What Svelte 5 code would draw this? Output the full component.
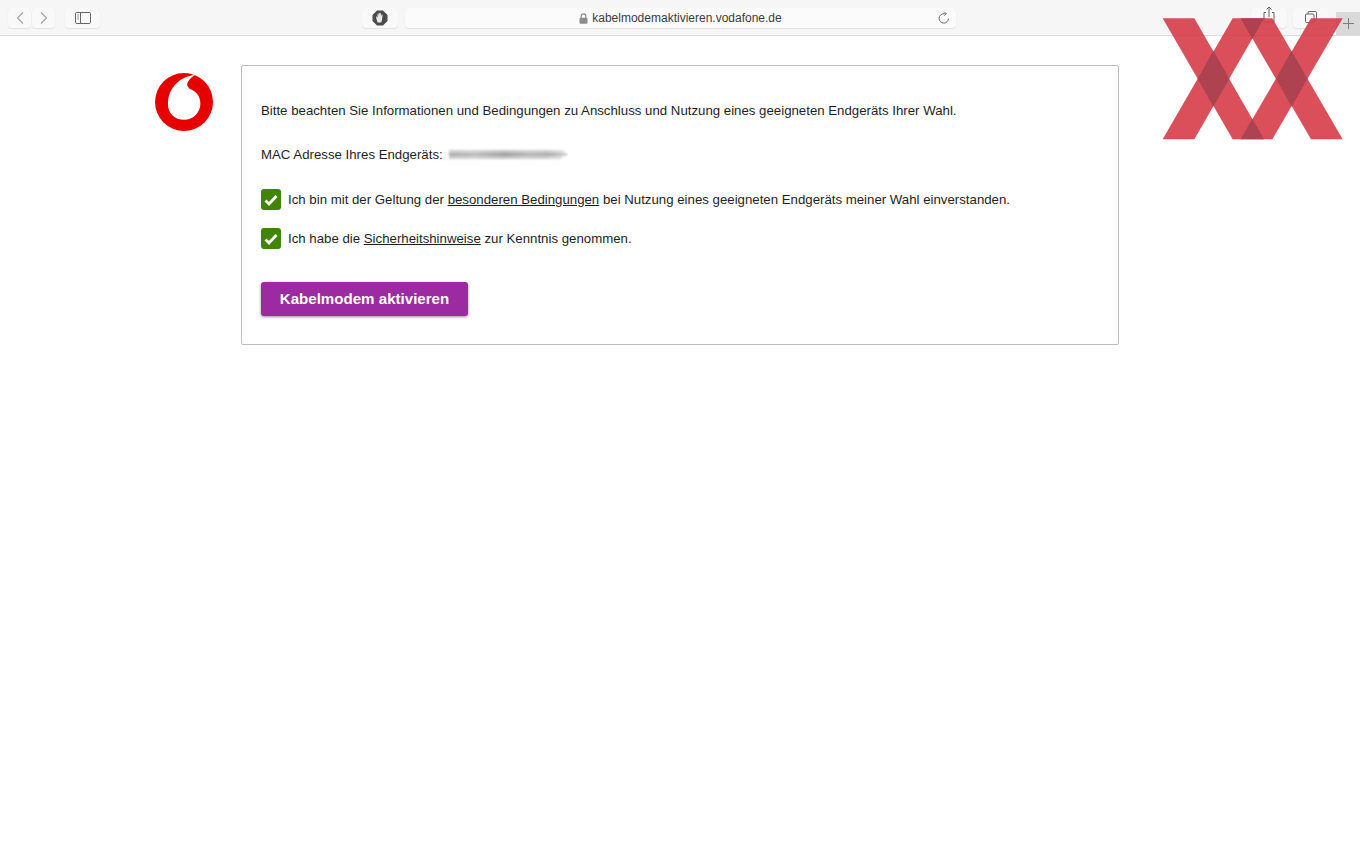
<script>
  const macStreaks = [
    { width: 98, opacity: 0.5 },
    { width: 100, opacity: 0.8 },
    { width: 96, opacity: 0.5 }
  ]
</script>

<div class="page">
  <header class="toolbar">
    <div class="nav-group">
      <button class="tool nav" aria-label="Zurück">
        <svg width="10" height="14" viewBox="0 0 10 14"><path d="M8 1.500 2.500 7 8 12.500" /></svg>
      </button>
      <button class="tool nav" aria-label="Vor">
        <svg width="10" height="14" viewBox="0 0 10 14"><path d="M2 1.500 7.500 7 2 12.500" /></svg>
      </button>
    </div>
    <button class="tool sidebar" aria-label="Seitenleiste">
      <svg width="16" height="12" viewBox="0 0 16 12">
        <rect x="0.500" y="0.500" width="15" height="11" rx="1.200" />
        <path d="M5.500 .5v11" />
        <path class="dots" d="M2 3h2M2 5h2M2 7h2" />
      </svg>
    </button>
    <button class="tool shield" aria-label="Blocker">
      <svg width="16" height="16" viewBox="0 0 16 16">
        <path class="octagon" d="M5 .5h6L15.500 5v6L11 15.500H5L.5 11V5z" />
        <path class="hand" d="M5.500 12.500 4.200 8V6.300l1.300 1V3.800l.8-.1.500 2.500V2.800l.9-.1.300 3V3l.9.200.100 3 .7-1.700.9.300-.6 5.200-.8 2.500z" />
      </svg>
    </button>
    <div class="address">
      <span class="host">
        <svg class="lock" width="9" height="11" viewBox="0 0 9 11">
          <path class="shackle" d="M2.200 5V3.200a2.300 2.300 0 0 1 4.600 0V5" />
          <rect x="0.500" y="4.800" width="8" height="6" rx="1" />
        </svg>
        kabelmodemaktivieren.vodafone.de
      </span>
      <svg class="reload" width="12" height="13" viewBox="0 0 12 13">
        <path d="M10.500 7.500A4.700 4.700 0 1 1 6 2.700h1.500" />
        <path d="M6.300.7 8.300 2.700 6.300 4.700" />
      </svg>
    </div>
    <div class="tool-spacer"></div>
    <button class="tool share" aria-label="Teilen">
      <svg width="14" height="18" viewBox="0 0 14 18">
        <path d="M4 6.500H2v9.500h10V6.500h-2" />
        <path d="M7 11V1M4.500 3.500 7 1l2.500 2.500" />
      </svg>
    </button>
    <button class="tool tabs" aria-label="Tabs">
      <svg width="12" height="12" viewBox="0 0 12 12">
        <rect x="3" y="0.500" width="8.500" height="8.500" rx="1" />
        <rect x="0.500" y="3" width="8.500" height="8.500" rx="1" class="front" />
      </svg>
    </button>
    <div class="new-tab">
      <svg width="11" height="11" viewBox="0 0 11 11"><path d="M5.500 0v11M0 5.500h11" /></svg>
    </div>
  </header>

  <main class="content">
    <svg class="logo" width="58" height="58" viewBox="47 40 170 170" role="img" aria-label="Vodafone">
      <circle cx="132" cy="125" r="85" fill="#e60000" />
      <path fill="#fff" d="M164 46C122 50 85 82 85 131C85 160 105 177 132 177C160 177 180 155 180 130C180 108 168 94 150 87C143 82 139 74 143 67C147 59 155 52 164 46Z" />
    </svg>

    <section class="card">
      <p class="intro">Bitte beachten Sie Informationen und Bedingungen zu Anschluss und Nutzung eines geeigneten Endgeräts Ihrer Wahl.</p>

      <p class="mac">
        MAC Adresse Ihres Endgeräts:
        <span class="mac-value" aria-hidden="true">
          {#each macStreaks as streak}
            <i style="width: {streak.width}%; opacity: {streak.opacity}"></i>
          {/each}
        </span>
      </p>

      <div class="check-row first">
        <span class="checkbox">
          <svg width="14" height="12" viewBox="0 0 14 12"><path d="M1.500 6.500 5 10l7.500-8" /></svg>
        </span>
        <span>Ich bin mit der Geltung der <a href="#bedingungen">besonderen Bedingungen</a> bei Nutzung eines geeigneten Endgeräts meiner Wahl einverstanden.</span>
      </div>

      <div class="check-row">
        <span class="checkbox">
          <svg width="14" height="12" viewBox="0 0 14 12"><path d="M1.500 6.500 5 10l7.500-8" /></svg>
        </span>
        <span>Ich habe die <a href="#sicherheit">Sicherheitshinweise</a> zur Kenntnis genommen.</span>
      </div>

      <button class="activate">Kabelmodem aktivieren</button>
    </section>
  </main>

  <svg class="watermark" width="210" height="150" viewBox="0 0 630 450" aria-hidden="true">
    <g class="bands">
      <polygon points="38,55 133,55 342,418 248,418" />
      <polygon points="38,418 133,418 342,55 248,55" />
      <polygon points="272,55 367,55 578,418 483,418" />
      <polygon points="272,418 367,418 578,55 483,55" />
    </g>
    <g class="overlaps">
      <polygon points="190,152 238,236 190,320 143,236" />
      <polygon points="425,152 472,236 425,320 378,236" />
      <polygon points="272,55 342,55 307,117" />
      <polygon points="272,418 342,418 307,356" />
    </g>
  </svg>
</div>

<style>
  :global(body) {
    margin: 0;
    background: #fff;
  }

  .page {
    position: relative;
    min-height: 850px;
    overflow: hidden;
    font-family: "Liberation Sans", Arial, sans-serif;
    color: #1e1e1e;
  }

  .toolbar {
    display: flex;
    align-items: flex-start;
    box-sizing: border-box;
    height: 36px;
    padding: 8px 0 0 8px;
    background: #f6f6f6;
    border-bottom: 1px solid #dcdcdc;
  }

  .tool {
    display: flex;
    align-items: center;
    justify-content: center;
    height: 20px;
    padding: 0;
    border: 0;
    border-radius: 4px;
    background: #f9f9f9;
    box-shadow: 0 1px 1px rgba(0, 0, 0, 0.08), 0 0 1px rgba(0, 0, 0, 0.06);
  }

  .tool svg {
    fill: none;
    stroke-width: 1;
  }

  .nav-group {
    display: flex;
    gap: 1px;
  }

  .nav {
    width: 23px;
  }

  .nav svg {
    stroke: #a0a0a0;
    stroke-width: 1.100;
  }

  .sidebar {
    width: 35px;
    margin-left: 10px;
  }

  .sidebar svg {
    stroke: #666;
  }

  .sidebar .dots {
    stroke: #999;
  }

  .shield {
    width: 36px;
    margin-left: 262px;
  }

  .octagon {
    fill: #4a4a4a;
    stroke: none;
  }

  .hand {
    fill: #e8e8e8;
    stroke: none;
  }

  .address {
    position: relative;
    display: flex;
    align-items: center;
    justify-content: center;
    width: 551px;
    height: 20px;
    margin-left: 7px;
    border-radius: 4px;
    background: #fbfbfb;
    box-shadow: 0 1px 1px rgba(0, 0, 0, 0.08), 0 0 1px rgba(0, 0, 0, 0.06);
  }

  .host {
    display: flex;
    align-items: center;
    gap: 4px;
    font-size: 12px;
    color: #3c3c3c;
  }

  .lock {
    fill: #8c8c8c;
  }

  .lock .shackle {
    fill: none;
    stroke: #8c8c8c;
    stroke-width: 1.200;
  }

  .reload {
    position: absolute;
    right: 6px;
    top: 3px;
    fill: none;
    stroke: #6e6e6e;
    stroke-width: 1;
  }

  .tool-spacer {
    flex: 1;
  }

  .share,
  .tabs {
    width: 36px;
  }

  .share {
    margin-right: 6px;
  }

  .share svg,
  .tabs svg {
    stroke: #666;
  }

  .share svg {
    margin-top: -6px;
  }

  .tabs svg {
    margin-top: -2px;
  }

  .tabs .front {
    fill: #f9f9f9;
  }

  .new-tab {
    display: flex;
    align-items: center;
    justify-content: center;
    width: 24px;
    height: 23px;
    margin: 4px 0 0 7px;
    background: #d9d9d9;
  }

  .new-tab svg {
    stroke: #7d7d7d;
    stroke-width: 1;
  }

  .content {
    display: flex;
    align-items: flex-start;
    gap: 28px;
    padding: 29px 0 0 155px;
  }

  .logo {
    flex: none;
    margin-top: 8px;
  }

  .card {
    box-sizing: border-box;
    width: 878px;
    height: 280px;
    padding: 36px 19px 0;
    border: 1px solid #bdbdbd;
    border-radius: 2px;
    font-size: 13.240px;
    line-height: 17px;
  }

  .intro,
  .mac {
    margin: 0;
  }

  .mac {
    display: flex;
    align-items: center;
    gap: 6px;
    margin-top: 27px;
  }

  .mac-value {
    display: flex;
    flex-direction: column;
    width: 118px;
    height: 9px;
    margin-top: -1px;
    filter: blur(1px);
  }

  .mac-value i {
    display: block;
    height: 3px;
    background: linear-gradient(90deg, #999, #aaa 22%, #888 48%, #a5a5a5 68%, #999 85%, #c4c4c4);
  }

  .check-row {
    display: flex;
    align-items: center;
    gap: 7px;
    margin-top: 18px;
    height: 21px;
  }

  .check-row.first {
    margin-top: 26px;
  }

  .checkbox {
    display: flex;
    align-items: center;
    justify-content: center;
    width: 20px;
    height: 21px;
    border-radius: 3px;
    background: #428504;
  }

  .checkbox svg {
    fill: none;
    stroke: #fff;
    stroke-width: 2.800;
  }

  a {
    color: inherit;
    text-decoration: underline;
  }

  .activate {
    display: block;
    width: 207px;
    height: 34px;
    margin-top: 33px;
    padding: 0 0 2px;
    border: 0;
    border-radius: 3px;
    background: #9c2aa0;
    box-shadow: 0 1px 3px rgba(90, 20, 95, 0.55);
    color: #fff;
    font-family: inherit;
    font-size: 15.100px;
    font-weight: bold;
  }

  .watermark {
    position: absolute;
    top: 0;
    right: 0;
    pointer-events: none;
  }

  .bands {
    fill: #d63c48;
    opacity: 0.9;
  }

  .overlaps {
    fill: #6e3044;
    opacity: 0.4;
  }
</style>
